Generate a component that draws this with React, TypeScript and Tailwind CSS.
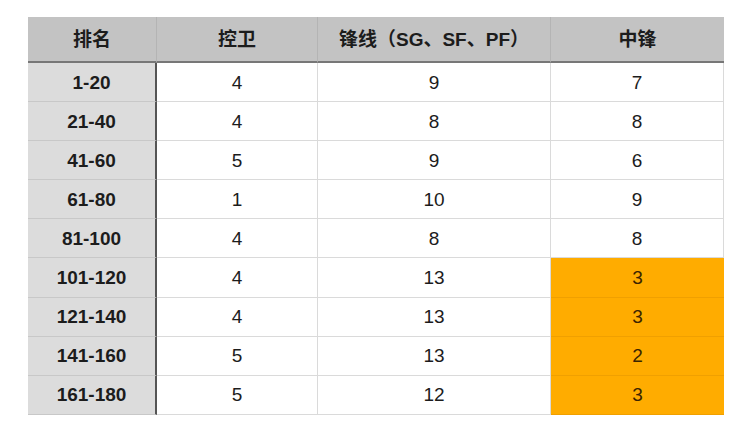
import React from 'react';

const rows: [string, string, string, string, boolean][] = [
  ['1-20', '4', '9', '7', false],
  ['21-40', '4', '8', '8', false],
  ['41-60', '5', '9', '6', false],
  ['61-80', '1', '10', '9', false],
  ['81-100', '4', '8', '8', false],
  ['101-120', '4', '13', '3', true],
  ['121-140', '4', '13', '3', true],
  ['141-160', '5', '13', '2', true],
  ['161-180', '5', '12', '3', true],
];

export default function App() {
  return (
    <div
      className="w-[750px] h-[433px] bg-white pt-[17px] pl-[28px]"
      style={{ fontFamily: '"Liberation Sans", "Noto Sans CJK SC", sans-serif' }}
    >
      <div className="w-[696px] grid grid-cols-[129px_161px_233px_173px] text-[19px] leading-none text-[#1c1c1c]">
        {/* header */}
        <div className="h-[46px] flex items-center justify-center bg-[#c3c3c3] font-bold border-b-2 border-[#777] border-r border-r-[#b4b4b4]">排名</div>
        <div className="h-[46px] flex items-center justify-center bg-[#c3c3c3] font-bold border-b-2 border-[#777] border-r border-r-[#b4b4b4]">控卫</div>
        <div className="h-[46px] flex items-center justify-center bg-[#c3c3c3] font-bold border-b-2 border-[#777] border-r border-r-[#b4b4b4]">锋线（SG、SF、PF）</div>
        <div className="h-[46px] flex items-center justify-center bg-[#c3c3c3] font-bold border-b-2 border-[#777]">中锋</div>

        {rows.map(([rank, pg, fw, c, hi]) => (
          <React.Fragment key={rank}>
            <div className="h-[39.1px] flex items-center justify-center bg-[#dcdcdc] font-bold border-b border-b-[#c8c8c8] border-r-2 border-r-[#555]">{rank}</div>
            <div className="h-[39.1px] flex items-center justify-center bg-white border-b border-b-[#dadada] border-r border-r-[#dadada]">{pg}</div>
            <div className="h-[39.1px] flex items-center justify-center bg-white border-b border-b-[#dadada] border-r border-r-[#dadada]">{fw}</div>
            <div
              className={`h-[39.1px] flex items-center justify-center border-b ${
                hi ? 'bg-[#ffac00] border-b-[#f0a000] text-[#3a2400]' : 'bg-white border-b-[#dadada] border-r border-r-[#dadada]'
              }`}
            >
              {c}
            </div>
          </React.Fragment>
        ))}
      </div>
    </div>
  );
}
